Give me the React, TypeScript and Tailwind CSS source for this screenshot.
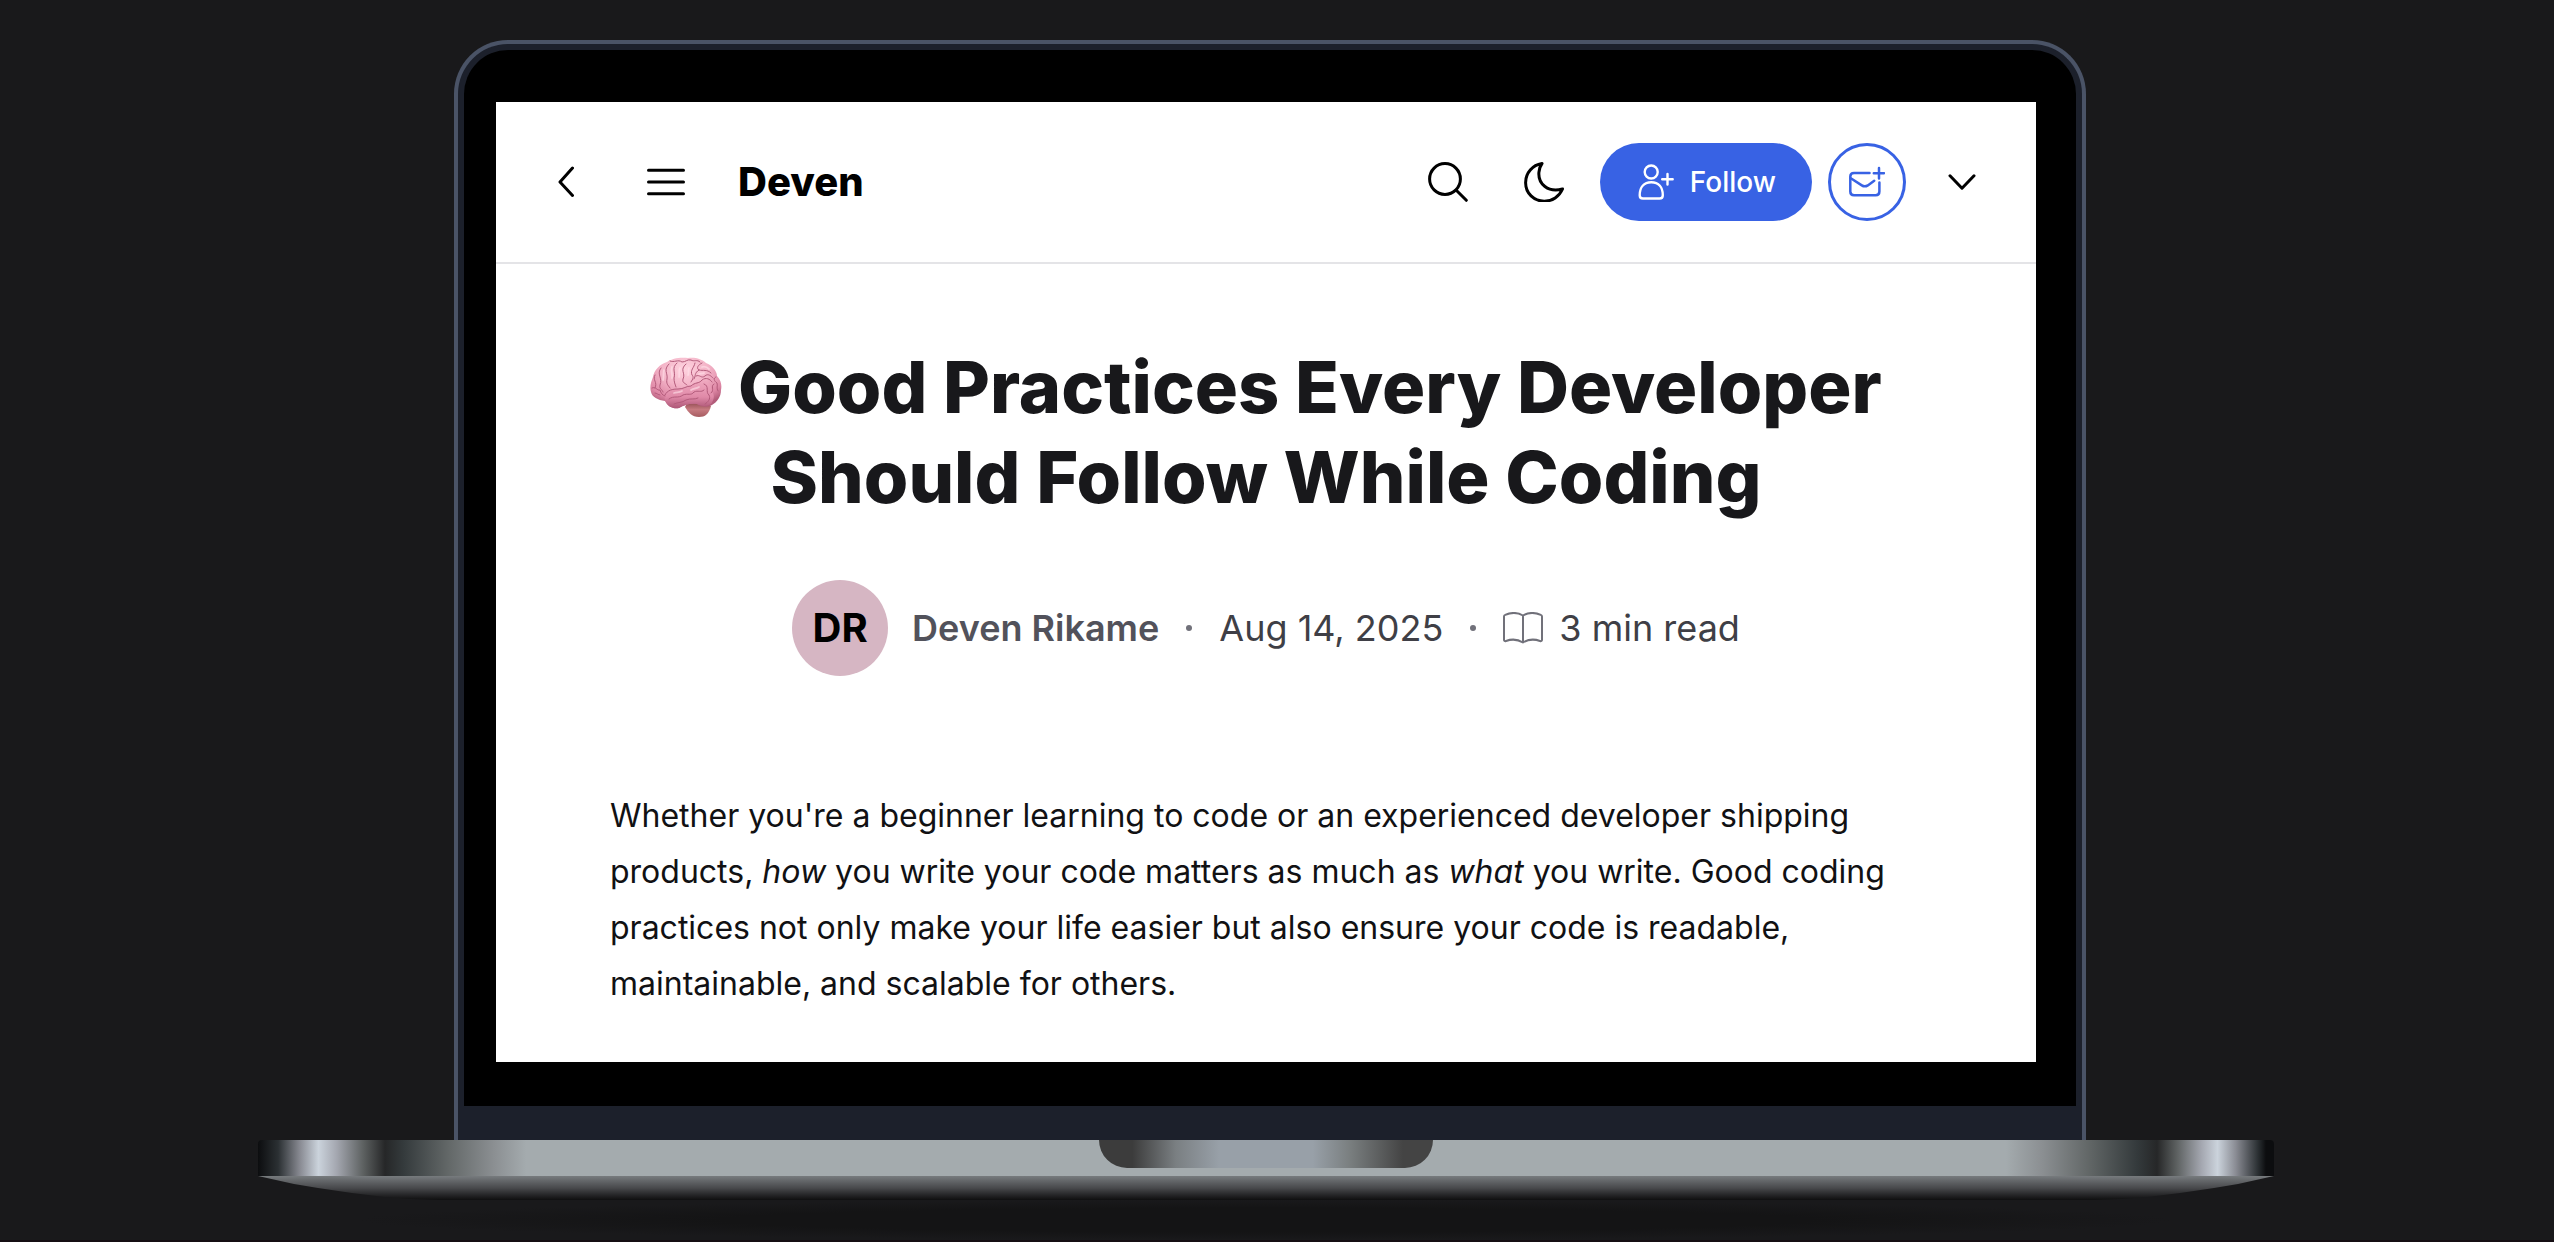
import React from "react";

const stroke = {
  fill: "none",
  stroke: "currentColor",
  strokeLinecap: "round" as const,
  strokeLinejoin: "round" as const,
};

function BackIcon() {
  return (
    <svg className="h-8 w-4" viewBox="0 0 16 32" {...stroke} strokeWidth="3" aria-hidden="true">
      <path d="M14.500 2 2 16l12.500 13.500" />
    </svg>
  );
}

function MenuIcon() {
  return (
    <svg className="h-8 w-10" viewBox="0 0 40 32" {...stroke} strokeWidth="3" aria-hidden="true">
      <path d="M2.500 4.200h35M2.500 16h35M2.500 27.800h35" />
    </svg>
  );
}

function SearchIcon() {
  return (
    <svg className="size-10" viewBox="0 0 40 40" {...stroke} strokeWidth="3" aria-hidden="true">
      <circle cx="17" cy="17" r="15.400" />
      <path d="m28.300 28.300 10 10" />
    </svg>
  );
}

function MoonIcon() {
  return (
    <svg className="size-10" viewBox="0 0 40 40" {...stroke} strokeWidth="3" aria-hidden="true">
      <path d="M18 1.500C8.500 3 1.600 11 1.600 20.700c0 10.500 8.300 18.500 18.700 18.500 8 0 15-4.700 18.200-12.200-14.500 4-24.500-5-23.600-16.700.2-3.400 1.300-6.300 3.100-8.800Z" />
    </svg>
  );
}

function UserPlusIcon() {
  return (
    <svg className="h-9 w-9" viewBox="0 0 36 36" {...stroke} strokeWidth="2.400" aria-hidden="true">
      <circle cx="13.200" cy="8" r="6.500" />
      <path d="M1.700 31.200c0-7.800 4.200-13 11.600-13s11.500 5.200 11.500 13c0 2-1.100 3.300-3.200 3.300H4.900c-2.100 0-3.200-1.300-3.200-3.300ZM29.500 10v10.500M24.200 15.300h10.500" />
    </svg>
  );
}

function MailPlusIcon() {
  return (
    <svg className="h-8 w-9" viewBox="0 0 36 32" {...stroke} strokeWidth="2.500" aria-hidden="true">
      <path d="M20.500 7H5C2.700 7 1.300 8.300 1.300 10.600v15c0 2.300 1.400 3.700 3.700 3.700h21.700c2.300 0 3.700-1.400 3.700-3.700V16.500" />
      <path d="m1.800 12.300 11 7.100c2.200 1.400 3.800 1.400 6 0l6.400-4.600M30 2v10.500M24.800 7.200H35" />
    </svg>
  );
}

function ChevronDownIcon() {
  return (
    <svg className="h-4 w-7" viewBox="0 0 28 16" {...stroke} strokeWidth="3" aria-hidden="true">
      <path d="m2 1.800 12 12.400L26 1.800" />
    </svg>
  );
}

function BookIcon() {
  return (
    <svg className="h-8 w-10" viewBox="0 0 40 32" {...stroke} strokeWidth="2" aria-hidden="true">
      <path d="M20 3.500C14.500.300 8 .400 2.200 2.900c-.8.300-1.200.9-1.200 1.700v23.100c0 1.100.9 1.700 2 1.300 5.400-2 11.800-1.700 17 1.500 5.200-3.200 11.600-3.500 17-1.500 1.100.4 2-.2 2-1.300V4.600c0-.8-.4-1.400-1.200-1.700C32 .400 25.500.300 20 3.500ZM20 3.500v27" />
    </svg>
  );
}

function BrainIcon() {
  return (
    <svg className="inline-block h-[60px] w-[72px] align-[-4px]" viewBox="0 0 72 60" role="img" aria-label="brain">
      <defs>
        <radialGradient id="cortex" cx="48%" cy="22%" r="75%">
          <stop offset="0" stopColor="#ffd3df" />
          <stop offset=".45" stopColor="#f3b3c7" />
          <stop offset=".8" stopColor="#de87a5" />
          <stop offset="1" stopColor="#b25c7a" />
        </radialGradient>
        <linearGradient id="temporal" x1="0" y1="0" x2="0" y2="1">
          <stop offset="0" stopColor="#f0a9c0" />
          <stop offset=".6" stopColor="#e08aa8" />
          <stop offset="1" stopColor="#ad5676" />
        </linearGradient>
        <linearGradient id="stem" x1="0" y1="0" x2="0" y2="1">
          <stop offset="0" stopColor="#8f4a50" />
          <stop offset=".5" stopColor="#c67a80" />
          <stop offset="1" stopColor="#a65c60" />
        </linearGradient>
      </defs>
      <path d="M35 50c3 5 7 10 14 10 6 0 10-3 12-11l-7-4-17 1Z" fill="url(#stem)" />
      <path
        d="M1 35C-.5 30 1 25 3 20 4 13 10 7 17 5 22 1 31 0 38 1c7-1 14 1 18 5 6 2 11 8 11 13 4 4 5 9 4 14 0 7-4 12-9 15-5 3-11 2-15-1-7-1-13 1-18 4-5 1-11-1-14-7C8 43 2 40 1 35Z"
        fill="url(#cortex)"
      />
      <path
        d="M15 39c2-6 8-7 14-7 5 0 7-3 12-3 3-4 9-4 12-6 6 1 8 6 9 12 3 3 2 8-1 12-5 3-10 2-14 0-7-1-13 1-18 4-6 1-11-1-13-6-1-2-2-4-1-6Z"
        fill="url(#temporal)"
      />
      <g fill="none" stroke="#b35b7b" strokeWidth="1" strokeLinecap="round">
        <path d="M15 38c2-5 8-6 13-6 6 0 8-3 13-3 4-4 8-2 11-6 4-3 8-1 10 2" />
        <path d="M19 42c5-4 9 0 14-4 5-2 8 1 11-3 4-2 7 1 10-2M24 47c4-2 8-1 12-4 5-2 8 0 12-2M54 27c6 2 1 8 5 11 2 4-1 7-4 9M64 27c-4 2 1 6-3 9" />
        <path d="M5 18c-3 5 3 7 0 13M11 11c-5 6 2 10-1 17-1 4 2 4 3 7M19 7c-6 6-1 9-2 15-1 5 1 6 3 9M27 6c-6 5-1 9-3 15 0 4 1 6 2 9M36 7c-7 6 0 9-3 15-1 4 2 4 4 6M45 6c-1 5-5 7-3 12 2 2 1 4-1 7" />
        <path d="M20 4c4 2 8-2 12 1 4 0 5-3 9-2 3 2 6-1 9 2M52 6c-4 2-6 5-3 7 4 1 8-1 12 3M49 13c-5 3-3 6-5 9M46 19c4-2 5 3 9 0 3-3 6 0 8 2M66 20c-3 1-2 4 1 6 1 3-1 5 1 8M2 31c4-2 5 3 8 2 1 3 2 5 5 6M5 36c2 0 3 2 5 2" />
      </g>
      <g fill="none" stroke="#ffe1ea" strokeOpacity=".6" strokeWidth="1.800" strokeLinecap="round">
        <path d="M14 13c-1 4 0 6-1 10M22 10c-2 4 1 6 0 11M30 11c-2 4 0 6-1 9M39 11c-1 3 0 5-1 7M52 10c3-1 5 0 7 2M49 17c2-1 4 0 5-1M24 36c3-1 5 0 8-2M41 33c3-2 5-1 8-3" />
      </g>
    </svg>
  );
}

function Header() {
  return (
    <header className="flex h-[162px] items-center border-b-2 border-[#e4e4e7] pr-[60px] pl-[62px] text-black">
      <button type="button" aria-label="Back" className="mr-[72px]">
        <BackIcon />
      </button>
      <button type="button" aria-label="Menu" className="mr-[52px]">
        <MenuIcon />
      </button>
      <a href="#home" className="text-[40px] leading-none font-extrabold">
        Deven
      </a>
      <div className="ml-auto flex items-center">
        <button type="button" aria-label="Search" className="mr-14">
          <SearchIcon />
        </button>
        <button type="button" aria-label="Toggle dark mode" className="mr-9">
          <MoonIcon />
        </button>
        <button
          type="button"
          className="mr-4 flex h-[78px] items-center gap-4 rounded-full bg-[#3862e4] pr-9 pl-[38px] text-[28px] leading-none font-medium text-white"
        >
          <UserPlusIcon />
          Follow
        </button>
        <button
          type="button"
          aria-label="Subscribe to newsletter"
          className="mr-[42px] flex size-[78px] items-center justify-center rounded-full border-3 border-[#3862e4] text-[#3862e4]"
        >
          <MailPlusIcon />
        </button>
        <button type="button" aria-label="More">
          <ChevronDownIcon />
        </button>
      </div>
    </header>
  );
}

function Article() {
  return (
    <article className="px-[114px] pt-[78px] pb-[50px]">
      <h1 className="text-center text-[72px] leading-[90px] font-extrabold text-[#18181b]">
        <BrainIcon /> Good Practices Every Developer Should Follow While Coding
      </h1>
      <div className="mt-[58px] flex items-center justify-center text-4xl text-[#3f3f46]">
        <span className="mr-6 flex size-24 items-center justify-center rounded-full bg-[#d6b6c3] text-[40px] font-bold text-black">
          DR
        </span>
        <a href="#author" className="font-semibold text-[#52525b]">
          Deven Rikame
        </a>
        <span className="mx-[27px] size-[6px] rounded-full bg-[#71717a]" />
        <time dateTime="2025-08-14">Aug 14, 2025</time>
        <span className="mx-[27px] size-[6px] rounded-full bg-[#71717a]" />
        <span className="flex items-center gap-4">
          <span className="text-[#71717a]">
            <BookIcon />
          </span>
          3 min read
        </span>
      </div>
      <p className="mt-28 text-[32px] leading-[56px] text-[#111113]">
        Whether you're a beginner learning to code or an experienced developer shipping products, <em>how</em> you write
        your code matters as much as <em>what</em> you write. Good coding practices not only make your life easier but
        also ensure your code is readable, maintainable, and scalable for others.
      </p>
    </article>
  );
}

export default function App() {
  return (
    <main className="min-h-screen border-b-2 border-[#150e13] bg-[#19191b] pt-10 pr-[22px] font-['Inter',sans-serif]">
      <div className="mx-auto w-full max-w-[2016px]">
        <div className="mr-[188px] ml-[196px] rounded-t-[54px] border-4 border-b-0 border-[#4a5366] bg-[#1c202b] px-[6px] pt-[6px] pb-[34px]">
          <div className="rounded-t-[44px] bg-black pt-[52px] pr-10 pb-11 pl-8">
            <div className="bg-white">
              <Header />
              <Article />
            </div>
          </div>
        </div>
        <div className="flex h-9 justify-center rounded-t bg-[linear-gradient(90deg,#0c0d0f_0%,#2b3033_1%,#8a8c94_2.1%,#cbd3dc_3%,#a4a7b0_3.9%,#5e6262_5.2%,#262728_6.3%,#343a3c_7.200%,#626767_9.400%,#8b8f92_11.700%,#a4abae_13.300%,#a4abae_86.700%,#8b8f92_88.500%,#626767_90.800%,#343a3c_93.200%,#262728_94.200%,#5e6262_95.200%,#a4a7b0_96.400%,#cbd3dc_97.200%,#8a8c94_98.100%,#2b3033_99.200%,#0c0d0f_99.600%)]">
          <div className="h-7 w-[334px] rounded-b-[28px] bg-[linear-gradient(90deg,#3c3c3c_10%,#7a7f82_23%,#98a0a8_36%,#98a0a8_64%,#7a7f80_75%,#444444_91%)]" />
        </div>
        <div className="h-6 bg-linear-to-b from-[#777b7e] via-[#48494c] to-[#0f0f10] [clip-path:polygon(0_0,100%_0,calc(100%_-_36px)_8px,calc(100%_-_60px)_12px,calc(100%_-_94px)_17px,calc(100%_-_127px)_21px,calc(100%_-_152px)_23px,calc(100%_-_180px)_24px,180px_24px,152px_23px,127px_21px,94px_17px,60px_12px,36px_8px)]" />
        <div className="mx-[100px] h-10 bg-[radial-gradient(closest-side,#141415_60%,#19191b)]" />
      </div>
    </main>
  );
}
